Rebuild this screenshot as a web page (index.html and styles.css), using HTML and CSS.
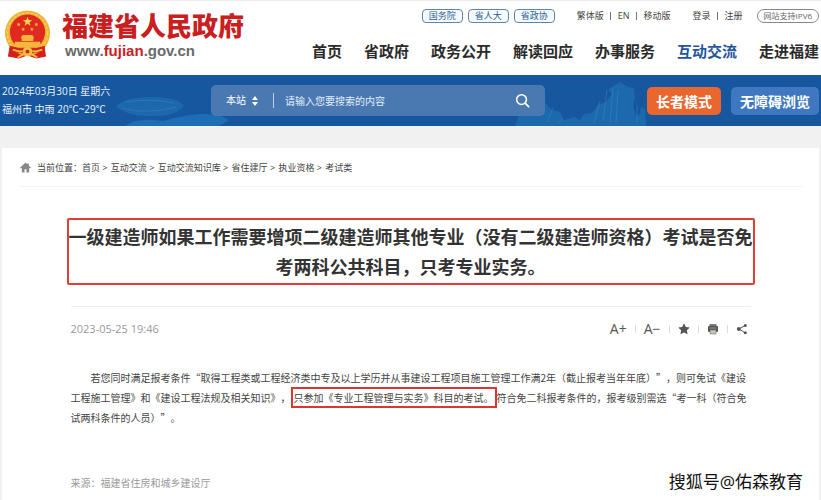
FILE: index.html
```html
<!DOCTYPE html>
<html lang="zh-CN">
<head>
<meta charset="utf-8">
<meta name="viewport" content="width=device-width, initial-scale=1">
<title>福建省人民政府</title>
<link rel="stylesheet" href="styles.css">
</head>
<body>
<header class="header">
  <a class="brand" href="#">
    <svg class="emblem" viewBox="0 0 48 52" aria-hidden="true">
      <path d="M6 36 L4 48 L15 50 L24 47 L33 50 L43 48 L41 36Z" fill="#d3201c"/>
      <circle cx="24" cy="24" r="23" fill="#efb435"/>
      <circle cx="24" cy="24" r="20.500" fill="none" stroke="#f7ce5e" stroke-width="1.500" stroke-dasharray="3 1.500"/>
      <circle cx="24" cy="23" r="18" fill="#e02a20"/>
      <path d="M24 7.500l1.300 3.300 3.500.1-2.800 2.200 1 3.400-3-2-3 2 1-3.400-2.800-2.200 3.500-.1z" fill="#fbd34c"/>
      <g fill="#f4b63c">
        <path d="M15 13l.6 1.400 1.500.1-1.200 1 .4 1.500-1.300-.8-1.300.8.4-1.500-1.200-1 1.500-.1z"/>
        <path d="M33 13l.6 1.400 1.500.1-1.200 1 .4 1.500-1.300-.8-1.300.8.4-1.500-1.200-1 1.500-.1z"/>
        <path d="M19.500 18l.6 1.400 1.500.1-1.200 1 .4 1.500-1.300-.8-1.300.8.4-1.500-1.200-1 1.500-.1z"/>
        <path d="M28.500 18l.6 1.400 1.500.1-1.200 1 .4 1.500-1.300-.8-1.300.8.4-1.500-1.200-1 1.500-.1z"/>
        <path d="M19 26h10l2 3H17zM18 29h12v3H18zM11 33h26v3H11zM8 36h32l-3 3H11z"/>
      </g>
      <path d="M6 37q18 6 36 0l-1 5q-5 3-10 2l-7 3-7-3q-5 1-10-2z" fill="#d3201c"/>
      <circle cx="24" cy="43" r="5" fill="#f3bd3e"/>
      <circle cx="24" cy="43" r="2" fill="#d3201c"/>
      <path d="M9 41q8 3 10 1M39 41q-8 3-10 1M14 49l5-3h10l5 3" fill="none" stroke="#f3bd3e" stroke-width="2"/>
    </svg>
    <span class="brand-text">
      <span class="brand-name">福建省人民政府</span>
      <span class="brand-url">www.<span class="red">fujian</span>.gov.cn</span>
    </span>
  </a>
  <div class="header-main">
    <div class="utility">
      <div class="pills">
        <a class="pill" href="#">国务院</a>
        <a class="pill" href="#">省人大</a>
        <a class="pill" href="#">省政协</a>
      </div>
      <div class="links"><a href="#">繁体版</a><i></i><a href="#">EN</a><i></i><a href="#">移动版</a></div>
      <div class="links"><a href="#">登录</a><i></i><a href="#">注册</a></div>
      <span class="ipv6">网站支持IPV6</span>
    </div>
    <nav class="nav">
      <a href="#">首页</a>
      <a href="#">省政府</a>
      <a href="#">政务公开</a>
      <a href="#">解读回应</a>
      <a href="#">办事服务</a>
      <a class="active" href="#">互动交流</a>
      <a href="#">走进福建</a>
    </nav>
  </div>
</header>

<section class="banner">
  <svg class="scenery" viewBox="0 0 821 51" preserveAspectRatio="xMidYMid slice" aria-hidden="true">
    <path d="M116 32q8-10 34-10 28 0 34 9-10 12-36 10-20 0-32-9z" fill="#2173b8" opacity=".6"/>
    <path d="M122 33q24 7 54-1M126 27q24-4 48 1" fill="none" stroke="#3585c4" opacity=".5"/>
    <path d="M125 51q12-9 38-5 24-7 40-7 18 0 26 6l-10 6z" fill="#1f78bf" opacity=".7"/>
    <path d="M515 51l4-10 12-2 6-9 8-2 7 7 8 2 4 8 10-3 6 3 4-6 8-1 6-8 8-3 6-8-4-4 12-8 8 5 6 1 1 10-2 8 3 10 4-2 1-7 4 2 1 18z" fill="#2378ba" opacity=".55"/>
    <path d="M607 15l-4 31M613 12l-3 36M618 15l-2 32M600 26l-6 22M553 33l-6 14M563 43l-6 6M637 31v16" stroke="#4291c9" stroke-width="1" opacity=".4"/>
  </svg>
  <div class="weather">2024年03月30日 星期六<br>福州市 中雨 20℃~29℃</div>
  <form class="search">
    <label class="scope">
      <select aria-label="搜索范围"><option>本站</option></select>
      <svg viewBox="0 0 8 12" aria-hidden="true"><path d="M4 1l3 4H1zM4 11L1 7h6z" fill="#fff"/></svg>
    </label>
    <input type="text" placeholder="请输入您要搜索的内容" aria-label="搜索内容">
    <button type="button" class="search-button" aria-label="搜索">
      <svg viewBox="0 0 16 16" aria-hidden="true"><circle cx="7" cy="7" r="5.200" fill="none" stroke="#fff" stroke-width="1.600"/><path d="M11 11l3.500 3.500" stroke="#fff" stroke-width="1.800" stroke-linecap="round"/></svg>
    </button>
  </form>
  <div class="modes">
    <button type="button" class="mode elder">长者模式</button>
    <button type="button" class="mode">无障碍浏览</button>
  </div>
</section>

<main class="panel">
  <nav class="crumbs" aria-label="当前位置">
    <svg viewBox="0 0 12 12" aria-hidden="true"><path d="M6 .5L0 6.200l1 1L2 6.400V11.500h3V8h2v3.500h3V6.400l1 .8 1-1L9.700 4V1.500H8V2.400z" fill="#888"/></svg>
    <span>当前位置：<a href="#">首页</a> &gt; <a href="#">互动交流</a> &gt; <a href="#">互动交流知识库</a> &gt; <a href="#">省住建厅</a> &gt; <a href="#">执业资格</a> &gt; <a href="#">考试类</a></span>
  </nav>
  <article class="article">
    <h1 class="title">一级建造师如果工作需要增项二级建造师其他专业（没有二级建造师资格）考试是否免考两科公共科目，只考专业实务。</h1>
    <div class="meta">
      <time datetime="2023-05-25T19:46">2023-05-25 19:46</time>
      <div class="tools">
        <button type="button">A+</button><i></i>
        <button type="button">A−</button><i></i>
        <button type="button" aria-label="收藏"><svg viewBox="0 0 12 12"><path d="M6 .3l1.800 3.600 4 .6-2.900 2.800.7 4L6 9.400l-3.600 1.900.7-4L.2 4.500l4-.6z" fill="#555"/></svg></button><i></i>
        <button type="button" aria-label="打印"><svg viewBox="0 0 12 12"><path d="M2.500 1h7v2h-7z" fill="#777"/><rect x="1" y="3" width="10" height="6" rx="1" fill="#555"/><path d="M3 7h6v4H3z" fill="#c9c4b8" stroke="#777" stroke-width=".6"/><path d="M2.500 5h7" stroke="#aaa" stroke-width=".8"/></svg></button><i></i>
        <button type="button" aria-label="分享"><svg viewBox="0 0 12 12"><path d="M9.200 2.500L3 6l6.200 3.800" fill="none" stroke="#555"/><circle cx="9.300" cy="2.400" r="1.500" fill="#555"/><circle cx="2.800" cy="6" r="2" fill="#555"/><circle cx="9.300" cy="9.800" r="1.500" fill="#555"/></svg></button>
      </div>
    </div>
    <p class="body">若您同时满足报考条件“取得工程类或工程经济类中专及以上学历并从事建设工程项目施工管理工作满2年（截止报考当年年底）”，则可免试《建设工程施工管理》和《建设工程法规及相关知识》，<mark>只参加《专业工程管理与实务》科目的考试。</mark>符合免二科报考条件的，报考级别需选“考一科（符合免试两科条件的人员）”。</p>
    <p class="source">来源：福建省住房和城乡建设厅</p>
  </article>
  <div class="watermark">搜狐号@佑森教育</div>
</main>
</body>
</html>
```
FILE: styles.css
```css
* { box-sizing: border-box; }
body {
  margin: 0;
  min-height: 100vh;
  display: flex;
  flex-direction: column;
  background: #f1f1f1;
  color: #333;
  font-family: "Open Sans", "Noto Sans CJK SC", sans-serif;
  font-size: 10px;
  text-spacing-trim: space-all;
  overflow-x: hidden;
}
a { color: inherit; text-decoration: none; }
button, input, select { font: inherit; color: inherit; border: 0; background: none; padding: 0; margin: 0; }
svg { display: block; }
p, h1 { margin: 0; }

.header {
  display: flex;
  justify-content: space-between;
  padding: 8px 2px 11px 4px;
  background: #fff;
  border-top: 1px solid #ececee;
}
.brand { display: flex; gap: 11px; }
.emblem { width: 47px; height: 52px; }
.brand-text { display: flex; flex-direction: column; }
.brand-name { color: #c9201f; font-size: 26px; font-weight: 900; line-height: 34px; }
.brand-url { padding-left: 3px; color: #6a6a6a; font: bold 15px/16px "Liberation Sans", sans-serif; }
.red { color: #c9201f; }

.header-main { display: flex; flex-direction: column; gap: 15px; white-space: nowrap; }
.utility { display: flex; justify-content: flex-end; align-items: center; gap: 22px; font-size: 9px; line-height: 14px; color: #444; }
.pills { display: flex; gap: 5px; }
.pill { padding: 0 6px; line-height: 12px; border: 1px solid #5c86ae; border-radius: 4px; color: #2c5f98; background: #f7fbff; }
.links { display: flex; align-items: center; gap: 6px; }
.links i { width: 1px; height: 8px; background: #777; }
.links i + a { margin-left: 1px; }
.ipv6 { margin-left: -8px; padding: 0 6px; font-size: 8px; line-height: 12px; border: 1px solid #888; border-radius: 8px; color: #666; }
.nav { display: flex; gap: 22px; font-size: 15px; font-weight: bold; line-height: 26px; color: #2b2b2b; }
.active { color: #1f569e; }

.banner {
  position: relative;
  display: flex;
  align-items: center;
  justify-content: space-between;
  padding: 10px 2px;
  background: #17579f;
  color: #fff;
}
.scenery { position: absolute; inset: 0; width: 100%; height: 100%; }
.weather, .search, .modes { position: relative; }
.weather { width: 209px; margin: -3px 0 -2px; line-height: 18px; color: #e8f3fc; }
.search { flex: 1; display: flex; align-items: center; height: 31px; padding: 0 15px; border-radius: 5px; background: #4a79b2; }
.scope { display: flex; align-items: center; gap: 4px; padding-right: 14px; border-right: 1px solid #bcd0e6; }
.scope select { appearance: none; width: 21px; line-height: 15px; }
.scope svg { width: 8px; height: 12px; }
.search input { flex: 1; min-width: 0; padding-left: 11px; outline: 0; }
.search input::placeholder { color: #e3eefa; opacity: 1; }
.search-button svg { width: 15px; height: 15px; }
.modes { display: flex; gap: 10px; margin-left: 102px; }
.mode { padding: 0 9px; height: 28px; border-radius: 5px; background: #3f78c1; font-size: 14px; font-weight: bold; white-space: nowrap; }
.elder { background: #ea662f; }

.panel { position: relative; flex: 1; margin: 22px 2px 0; padding: 0 16px; background: #fff; }
.crumbs { display: flex; align-items: center; gap: 6px; height: 39px; padding-left: 2px; border-bottom: 1px solid #f5f5f5; font-size: 9px; color: #444; }
.crumbs svg { width: 11px; height: 11px; }
.crumbs a + a { margin-left: 1px; }
.article { margin: 0 auto; max-width: 688px; padding-top: 31px; }
.title {
  padding: 2px 0 1px;
  border: 2px solid #e43c35;
  border-radius: 2px;
  font-size: 18px;
  line-height: 30px;
  text-align: center;
  color: #333;
}
.meta { display: flex; justify-content: space-between; align-items: center; margin: 21px 4px 0; height: 44px; border-top: 1px solid #eee; color: #999; }
.meta time { font-size: 11px; line-height: 16px; }
.tools { display: flex; align-items: center; gap: 8px; font-size: 14px; color: #555; padding-right: 3px; }
.tools i { width: 1px; height: 8px; background: #ddd; }
.tools svg { width: 12px; height: 12px; }
.body { margin: 18px 4px 0; padding-right: 2px; font-family: "Noto Sans CJK SC", sans-serif; line-height: 20px; text-indent: 20px; color: #444; }
.body mark { margin: 0 3px; background: none; color: inherit; outline: 2px solid #e0352f; outline-offset: 1px; }
.source { margin: 45px 4px 0; line-height: 20px; color: #999; }
.watermark {
  position: absolute;
  right: 16px;
  bottom: 6px;
  font-size: 17px;
  line-height: 24px;
  color: #111;
  text-shadow: 1px 1px 1px #fff, -1px -1px 1px #fff;
}
```
